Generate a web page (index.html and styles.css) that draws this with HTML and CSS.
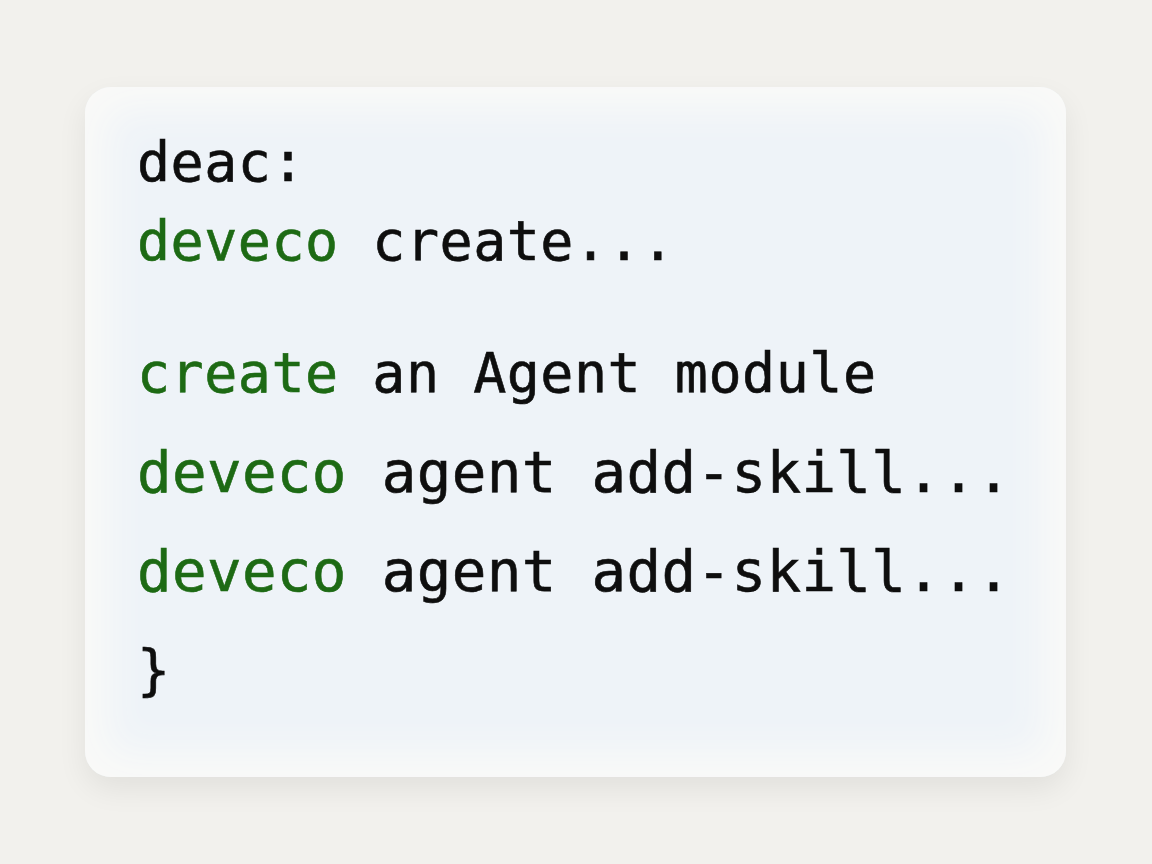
FILE: index.html
```html
<!DOCTYPE html>
<html>
<head>
<meta charset="utf-8">
<link rel="stylesheet" href="styles.css">
</head>
<body>
<div class="card">
  <div class="group group-top">
    <div class="line sm">deac:</div>
    <div class="line sm"><span class="kw">deveco</span> create...</div>
  </div>
  <div class="group group-bottom">
    <div class="line sm"><span class="kw">create</span> an Agent module</div>
    <div class="line lg"><span class="kw">deveco</span> agent add-skill...</div>
    <div class="line lg"><span class="kw">deveco</span> agent add-skill...</div>
    <div class="line sm">}</div>
  </div>
</div>
</body>
</html>
```

FILE: styles.css
```css
html, body {
  margin: 0;
  padding: 0;
}
body {
  background: #f2f1ed;
  width: 1152px;
  height: 864px;
  overflow: hidden;
}
.card {
  box-sizing: border-box;
  margin: 87px 0 0 85px;
  width: 981px;
  height: 690px;
  border-radius: 26px;
  background: #eef3f8;
  box-shadow: inset 0 0 40px 22px #fafaf8, 0 12px 30px rgba(0, 0, 0, 0.07);
  padding: 36px 0 0 52px;
  font-family: "DejaVu Sans Mono", "Liberation Mono", monospace;
  color: #0e0e0e;
  -webkit-text-stroke: 0.6px currentColor;
}
.group-top .line {
  line-height: 79px;
  height: 79px;
}
.group-bottom {
  margin-top: 43px;
}
.group-bottom .line {
  line-height: 99px;
  height: 99px;
}
.line {
  white-space: pre;
}
.sm {
  font-size: 55px;
  letter-spacing: 0.5px;
}
.lg {
  font-size: 57.5px;
  letter-spacing: 0.35px;
}
.kw {
  color: #1d6a14;
}
```
